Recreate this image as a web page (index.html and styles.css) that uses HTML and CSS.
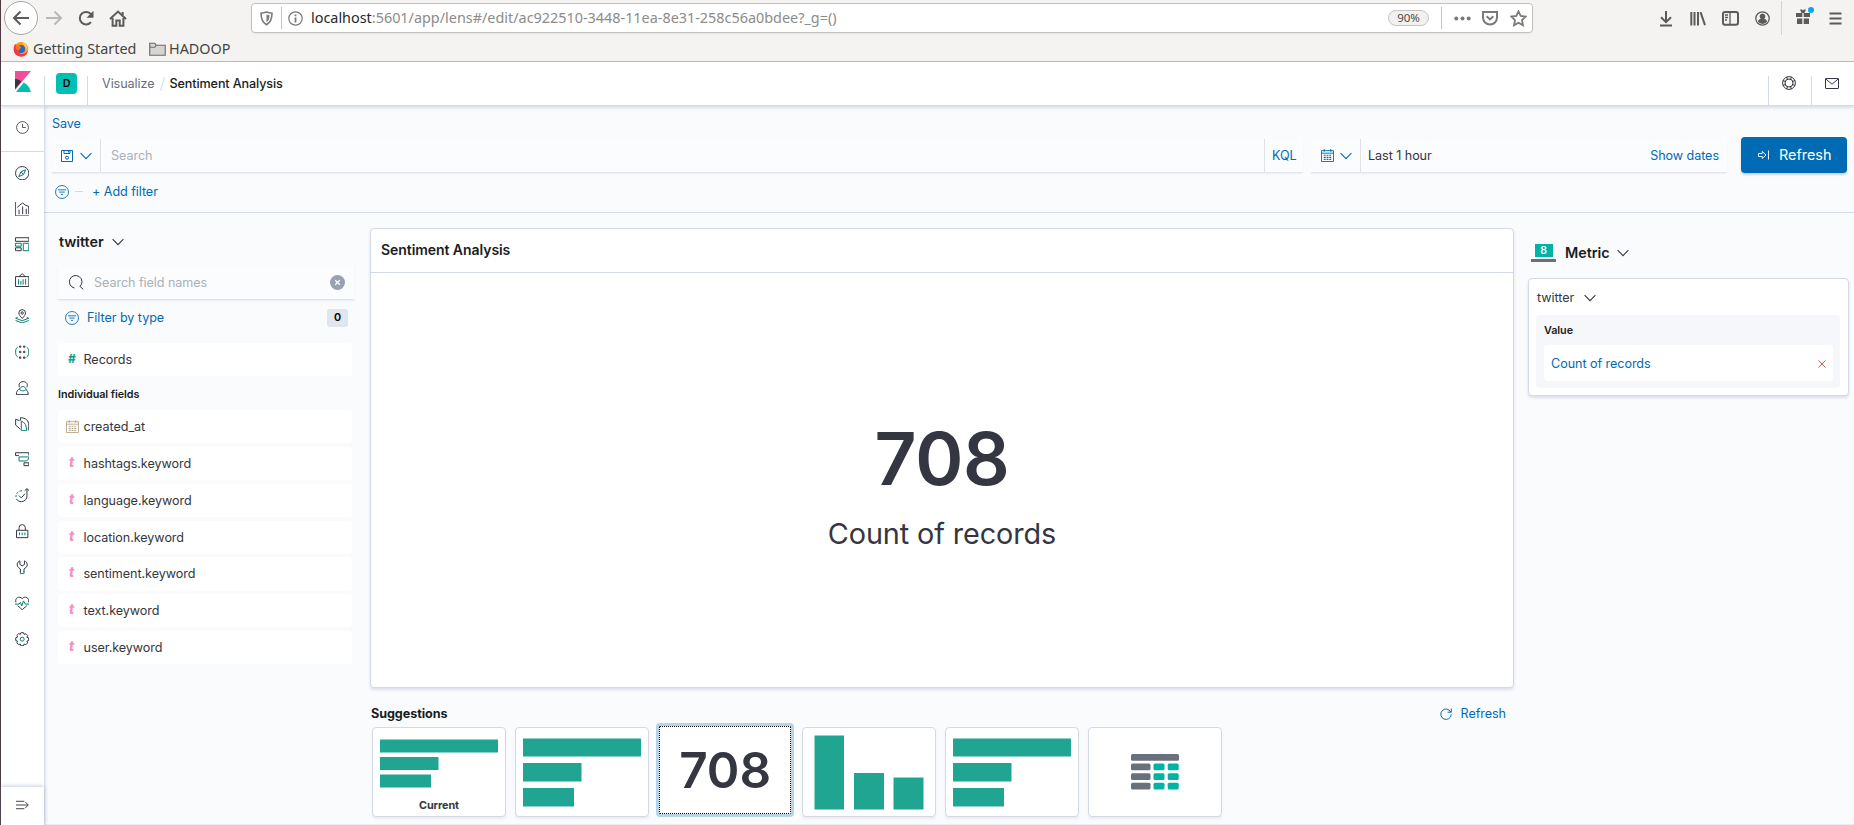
FILE: index.html
```html
<!DOCTYPE html>
<html lang="en">
<head>
<meta charset="utf-8">
<title>Sentiment Analysis - Kibana</title>
<link rel="stylesheet" href="styles.css">
</head>
<body>
<svg class="defs" aria-hidden="true">
  <symbol id="chevron" viewBox="0 0 12 12"><path d="M.6 3.200 6 8.600l5.400-5.400" stroke-width="1.100"/></symbol>
  <symbol id="filter" viewBox="0 0 16 16"><circle cx="8" cy="8" r="7.400"/><path d="M3.300 5.500h9.400M4.800 8.100h6.400M6.700 10.700h2.600"/></symbol>
  <symbol id="calendar" viewBox="0 0 14 14"><path d="M.5 1.800h13v11.700H.5zM.5 4.500h13M3.500 0v3M10.500 0v3"/><path d="M3 6.800h2M6 6.800h2M9 6.800h2M3 9h2M6 9h2M9 9h2M3 11.200h2M6 11.200h2M9 11.200h2" stroke-width="1.200"/></symbol>
</svg>
<div class="window">
  <header class="browser">
    <div class="toolbar">
      <span class="back"><svg width="18" height="16" viewBox="0 0 18 16"><path d="M17 8H2M8.500 1.500 2 8l6.500 6.500"/></svg></span>
      <svg class="forward" width="18" height="16" viewBox="0 0 18 16"><path d="M1 8h15M9.500 1.500 16 8l-6.500 6.500"/></svg>
      <svg class="reload" width="17" height="16" viewBox="0 0 17 16"><path d="M13 12.200A6.300 6.300 0 1 1 13 4.200"/><path class="solid" d="M15.500.8v7H8.500z"/></svg>
      <svg class="home" width="18" height="17" viewBox="0 0 18 17"><path d="M1 9 9 1.500 17 9M3.600 8v7.700h3.700V10.500h3.400v5.200h3.700V8"/><path d="M13.700 2v3"/></svg>
      <div class="urlbar">
        <svg class="shield" width="13" height="15" viewBox="0 0 13 15"><path d="M6.500 1C8.500 1.800 10 2.100 12 2.200c0 5.800-1 9-5.500 11.600C2 11.200 1 8 1 2.200c2-.1 3.500-.4 5.500-1.200z"/><path class="solid" d="M6.500 3.600c1.200.5 2.100.6 3 .7-.1 3.500-.8 5.400-3 7z"/></svg>
        <i class="bar-divider"></i>
        <svg class="info" width="15" height="15" viewBox="0 0 15 15"><circle cx="7.500" cy="7.500" r="6.700"/><path d="M7.500 6.500v5M7.500 3.500v1.700" stroke-width="1.800"/></svg>
        <span class="url"><b>localhost</b>:5601/app/lens#/edit/ac922510-3448-11ea-8e31-258c56a0bdee?_g=()</span>
        <span class="zoom">90%</span>
        <i class="bar-divider second"></i>
        <svg class="dots" width="17" height="5" viewBox="0 0 17 5"><circle cx="2.300" cy="2.500" r="2"/><circle cx="8.500" cy="2.500" r="2"/><circle cx="14.700" cy="2.500" r="2"/></svg>
        <svg class="pocket" width="16" height="15" viewBox="0 0 16 15"><path d="M1 1h14v5.500a7 7 0 0 1-14 0z"/><path d="M4.700 5.200 8 8.400l3.300-3.200"/></svg>
        <svg class="star" width="17" height="17" viewBox="0 0 17 17"><path d="m8.500 1.300 2.200 4.700 5 .6-3.700 3.500 1 5.200-4.500-2.600L4 15.300l1-5.200L1.300 6.600l5-.6z"/></svg>
      </div>
      <div class="tools">
        <svg width="14" height="17" viewBox="0 0 14 17"><path d="M7 1v11M2 7.200l5 5 5-5M1 15.500h12"/></svg>
        <svg width="16" height="15" viewBox="0 0 16 15"><path d="M1.300 1v13.500M4.500 1v13.500M8 1v13.500M10.500 1.200l4.500 13"/></svg>
        <svg width="17" height="15" viewBox="0 0 17 15"><rect x="1" y="1" width="15" height="12.700" rx="2"/><path d="M8 1v12.700M3 4h3M3 6.500h3M3 9h2" stroke-width="1.300"/></svg>
        <svg width="15" height="15" viewBox="0 0 15 15"><circle cx="7.500" cy="7.500" r="6.700" stroke-width="1.300"/><path class="solid" d="M7.500 2.500a2.900 2.900 0 0 1 1.700 5.200c1.700.4 2.700 1.500 2.900 3.100a6 6 0 0 1-9.200 0c.2-1.600 1.200-2.700 2.900-3.100a2.900 2.900 0 0 1 1.700-5.200z"/></svg>
        <i class="tool-divider"></i>
        <svg class="gift" width="19" height="18" viewBox="0 0 19 18"><path class="solid" d="M1 6h6.300v4H1zM8.700 6H15v4H8.700zM2 11.500h5.300V17H2zM8.700 11.500H14V17H8.700zM5 2.500h2l1 1 1-1h2L9.500 6h-3z"/><circle cx="16" cy="3" r="3"/></svg>
        <svg class="menu" width="13" height="13" viewBox="0 0 13 13"><path d="M.5 1.500h12M.5 6.500h12M.5 11.500h12"/></svg>
      </div>
    </div>
    <div class="bookmarks">
      <svg width="16" height="16" viewBox="0 0 16 16"><circle cx="8" cy="8.300" r="7.300" fill="#ff9a1f"/><path d="M2 3C0 7 0 12 4 14.500c5 2.700 10 .5 11-5C13 13 9 14 6 12 3 10 4 7 6 6z" fill="#f4364a"/><circle cx="8" cy="8" r="4" fill="#2467c9"/><path d="M3 4c2 1 5 0 5 3-1 1-2 1-2 3C3 9 2 6 3 4z" fill="#ff7424"/><path d="M9 1c4 1 6 5 5.500 9C13 7 11 4 9 1z" fill="#ffd633"/></svg>
      <span class="started">Getting Started</span>
      <svg width="17" height="14" viewBox="0 0 17 14"><path class="folder" d="M.7 1.200h5l1.500 2h9V13.300H.7zM.7 5.200h5l1.500-2"/></svg>
      <span class="hadoop">HADOOP</span>
    </div>
  </header>

  <div class="topbar">
    <div class="logo"><svg width="16" height="21" viewBox="0 0 16 21"><path d="M0 0h16L0 19z" fill="#f04e98"/><path d="M0 8c2.500.2 4.800 1 6.500 2.500L0 18z" fill="#343741"/><path d="M1 21 8.800 11.400C12.500 13.500 15 17 16 21z" fill="#00bfb3"/></svg></div>
    <div class="space"><span>D</span></div>
    <nav class="crumbs"><span>Visualize</span><i></i><strong>Sentiment Analysis</strong></nav>
    <div class="top-action"><svg width="14" height="14" viewBox="0 0 14 14"><circle cx="7" cy="7" r="6.400"/><circle cx="7" cy="7" r="4"/><path d="M4.500.9 5.500 3.300M9.500.9 8.500 3.300M4.500 13.100l1-2.400M9.500 13.100l-1-2.400M.9 4.500l2.400 1M.9 9.500l2.400-1M13.100 4.500l-2.400 1M13.100 9.500l-2.400-1"/></svg></div>
    <div class="top-action mail"><svg width="14" height="11" viewBox="0 0 14 11"><rect x=".5" y=".5" width="13" height="10" rx=".5"/><path d="m.8 1 6.200 5.200L13.200 1"/></svg></div>
  </div>

  <div class="app">
    <aside class="sidebar">
      <div class="recent"><svg viewBox="0 0 16 16" width="13" height="13"><circle cx="8" cy="8" r="7.300"/><path d="M8 3.500V8h4"/></svg></div>
      <nav class="nav">
        <span><svg viewBox="0 0 16 16"><circle cx="8" cy="8" r="7.400"/><path class="teal" d="M11.800 4.200 9.500 9.500l-5.300 2.300L6.500 6.500zM6.800 6.800l2.500 2.500"/></svg></span>
        <span><svg viewBox="0 0 16 16"><path class="teal" d="M.6 0v15.400H16"/><path d="m2.500 6 3-2.700L8.500 1l3 2.500L15.500 5M4.500 13.500V8.500M8.500 13.500V5M12.500 13.500v-6M15.300 5v8.500"/></svg></span>
        <span><svg viewBox="0 0 16 16"><path d="M.6.8h14.800v4H.6zM.6 12h6.300v3.200H.6z"/><path class="teal" d="M.6 7h6.300v3.200H.6zM9.200 7h6.200v8.200H9.200z"/></svg></span>
        <span><svg viewBox="0 0 16 16"><path d="M.6 4h14.800v11H.6zM4.500 4 8 .8 11.500 4"/><path class="teal" d="M4 7v6M6.500 9v4M9 7v6M11.800 6.500V13"/></svg></span>
        <span><svg viewBox="0 0 16 16"><path d="M8 10.500C5.500 7.800 4.300 6.300 4.300 4.400a3.700 3.700 0 0 1 7.400 0c0 1.900-1.200 3.400-3.700 6.100z"/><circle cx="8" cy="4.400" r="1.300"/><path class="teal" d="M3 9.200.7 10.300 8 13l7.300-2.700L13 9.200M.7 12.800 8 15.500l7.300-2.700"/></svg></span>
        <span><svg viewBox="0 0 16 16"><path d="M5 2.500V1.200h1.500v1.300zM9.500 2.500V1.200H11v1.300zM5 7h1.500v1.500H5zM9.500 7H11v1.500H9.500zM5 13.300h1.500v1.500H5zM9.500 13.300H11v1.500H9.500z"/><path class="teal" d="M3 2.500C.7 3.500.7 6.500.7 8s0 4 2.500 5.500M13 2.500c2.300 1 2.300 4 2.300 5.500s0 4-2.500 5.500"/></svg></span>
        <span><svg viewBox="0 0 16 16"><path d="M5 7C3.500 3.500 5.500.7 9 .7c4 0 5.700 3.300 4.200 6.300M5.500 8.500C3 9.500 1.500 11.500 1.500 15.200h13.200c0-3-1-4.700-2.500-5.700"/><path class="teal" d="M5 9.500C7 5 11 5 12.300 9.500 10 11.500 7.500 11.500 5 9.500z"/></svg></span>
        <span><svg viewBox="0 0 16 16"><path d="M5 4 .7 2.500V9L6 13.500M6 4V.8C12 .8 15.300 4 15.300 9v6"/><path class="teal" d="M7 4.500c4 1.500 6 5 6 10.700H7z"/></svg></span>
        <span><svg viewBox="0 0 16 16"><path d="M.6.8h14.800V4M.6.8V4h3.800M10 12h5.400v3.200H10z"/><path class="teal" d="M4.500 5.500h10.800v.5c0 2.500-1.800 4-4.300 4H4.500z"/></svg></span>
        <span><svg viewBox="0 0 16 16"><path d="M10.800 3 13.300.7 15.700 3M13.300 1v7.500a6.200 6.200 0 0 1-6 6.700c-2.500 0-4.500-1-5.800-3M4.500 8.500 7 11l4-4.500"/><path class="teal" d="M8 3C4 3 1 5.500 1 10" stroke-dasharray="3 1.500"/></svg></span>
        <span><svg viewBox="0 0 16 16"><path d="M1.700 7h12.600v8.200H1.700zM4.500 7V4.200a3.500 3.500 0 0 1 7 0V7"/><path class="teal" d="M5 9.500v3M8 9.500v3M11 9.500v3"/></svg></span>
        <span><svg viewBox="0 0 16 16"><path d="M5.500 1C2 2 1.500 6.500 4 8.500l2 1.500v3.500M10.500 1C14 2 14.500 6.500 12 8.500L10 10v3.500M5.500 1v4L8 6.500 10.500 5V1"/><path class="teal" d="M6 12.500v2.700h4v-2.700"/></svg></span>
        <span><svg viewBox="0 0 16 16"><path d="M1 7C-.5 2 5-.5 8 3c3-3.500 8.500-1 7 4M3 10.800l5 4.500 5-4.500"/><path class="teal" d="M0 9h4.500L6 7l1.500 4L9.500 5.500 11.500 9H16"/></svg></span>
        <span><svg viewBox="0 0 16 16"><path d="m6.500.8-.6 1.800-1.800-.8-2 2 .8 1.800L.8 6.500v3l2 .6-.8 2 2 2 1.900-.8.6 2h3l.6-2 2 .8 2-2-.9-2 2-.6v-3l-2-.6.9-2-2-2-2 .8-.6-1.900z"/><circle class="teal" cx="8" cy="8" r="2.200"/></svg></span>
      </nav>
      <div class="expand"><svg viewBox="0 0 14 10" width="13" height="10"><path d="M0 1h9M0 5h13M0 9h9M10 1.800 13.200 5 10 8.200"/></svg></div>
    </aside>

    <main class="content">
      <section class="query">
        <a class="save">Save</a>
        <div class="query-row">
          <div class="searchbar">
            <div class="saved"><svg class="disk" width="12" height="12" viewBox="0 0 12 12"><path d="M.5.5h11v11H.5zM3 .5v3h6v-3M7.500 1v1.500"/><circle cx="6" cy="7.700" r="1.500"/></svg><svg class="chev"><use href="#chevron"/></svg></div>
            <div class="query-input">Search</div>
            <div class="kql">KQL</div>
          </div>
          <div class="datebar">
            <div class="saved quick"><svg class="cal"><use href="#calendar"/></svg><svg class="chev"><use href="#chevron"/></svg></div>
            <span class="range">Last 1 hour</span>
            <a>Show dates</a>
          </div>
          <button class="refresh"><svg width="12" height="10" viewBox="0 0 12 10"><path d="M.5 3.500h3.800v-2L8 5 4.300 8.500v-2H.5zM10.500.5v9"/></svg>Refresh</button>
        </div>
        <div class="filters"><svg class="filter-icon"><use href="#filter"/></svg><i></i><a>+ Add filter</a></div>
      </section>

      <div class="lens">
        <section class="fields">
          <h2>twitter <svg class="chev"><use href="#chevron"/></svg></h2>
          <div class="field-search">
            <svg width="15" height="15" viewBox="0 0 15 15"><path d="M5.500 13A6.300 6.300 0 1 1 11 11.400M10.800 11.200l3.500 3.200"/></svg>
            <span>Search field names</span>
            <svg class="clear" width="15" height="15" viewBox="0 0 15 15"><circle cx="7.500" cy="7.500" r="7.500"/><path d="m5.200 5.200 4.600 4.600M9.800 5.200 5.200 9.800"/></svg>
          </div>
          <div class="field-type"><svg class="filter-icon"><use href="#filter"/></svg><a>Filter by type</a><span class="badge">0</span></div>
          <div class="field records"><b class="hash">#</b>Records</div>
          <h3>Individual fields</h3>
          <div class="field-list">
            <div class="field"><svg class="cal"><use href="#calendar"/></svg>created_at</div>
            <div class="field"><b>t</b>hashtags.keyword</div>
            <div class="field"><b>t</b>language.keyword</div>
            <div class="field"><b>t</b>location.keyword</div>
            <div class="field"><b>t</b>sentiment.keyword</div>
            <div class="field"><b>t</b>text.keyword</div>
            <div class="field"><b>t</b>user.keyword</div>
          </div>
        </section>

        <section class="workspace">
          <div class="panel">
            <h1>Sentiment Analysis</h1>
            <div class="metric"><div class="value">708</div><div class="label">Count of records</div></div>
          </div>
          <div class="suggest-head"><h2>Suggestions</h2><a><svg width="12" height="12" viewBox="0 0 12 12"><path d="M10.700 4A5.200 5.200 0 1 0 11.200 6.500M11.300.5v3.700H7.500"/></svg>Refresh</a></div>
          <div class="cards">
            <div class="card current"><svg width="118" height="49" viewBox="0 0 118 49"><path d="M0 .5h118v13H0zM0 18h58.500v13H0zM0 35.500h51v13H0z"/></svg><span>Current</span></div>
            <div class="card"><svg width="118" height="69" viewBox="0 0 118 69"><path d="M0 .5h118v18H0zM0 25h58.500v18.500H0zM0 50h51v18.500H0z"/></svg></div>
            <div class="card selected"><strong>708</strong></div>
            <div class="card"><svg width="110" height="75" viewBox="0 0 110 75"><path d="M.5.500h29.500V74.500H.5zM40 38h30v36.500H40zM79.500 42.500h30v32h-30z"/></svg></div>
            <div class="card"><svg width="118" height="69" viewBox="0 0 118 69"><path d="M0 .5h118v18H0zM0 25h58.500v18.500H0zM0 50h51v18.500H0z"/></svg></div>
            <div class="card"><svg width="48" height="36" viewBox="0 0 48 36"><g fill="#69707d"><rect width="48" height="6.700" rx="1.500"/><rect y="9.600" width="19.500" height="6.700" rx="1.500"/><rect y="19.200" width="19.500" height="6.700" rx="1.500"/><rect y="28.700" width="19.500" height="6.700" rx="1.500"/></g><g fill="#00b3a4"><rect x="22.500" y="9.600" width="11" height="6.700" rx="1.500"/><rect x="36.700" y="9.600" width="11" height="6.700" rx="1.500"/><rect x="22.500" y="19.200" width="11" height="6.700" rx="1.500"/><rect x="36.700" y="19.200" width="11" height="6.700" rx="1.500"/><rect x="22.500" y="28.700" width="11" height="6.700" rx="1.500"/><rect x="36.700" y="28.700" width="11" height="6.700" rx="1.500"/></g></svg></div>
          </div>
        </section>

        <section class="config">
          <h2><span class="metric-icon"><b>8</b></span>Metric <svg class="chev"><use href="#chevron"/></svg></h2>
          <div class="config-panel">
            <div class="source">twitter <svg class="chev"><use href="#chevron"/></svg></div>
            <div class="dimension">
              <h3>Value</h3>
              <div class="dimension-item"><a>Count of records</a><svg width="8" height="8" viewBox="0 0 8 8"><path d="m.5.5 7 7M7.500.5l-7 7"/></svg></div>
            </div>
          </div>
        </section>
      </div>
    </main>
  </div>
</div>
</body>
</html>
```
FILE: styles.css
```css
* { box-sizing: border-box; }
body { margin: 0; font: 400 12.6px/18px Inter, "Liberation Sans", sans-serif; letter-spacing: -0.06px; color: #343741; background: #fafbfd; overflow: hidden; }
h1, h2, h3 { margin: 0; color: #1a1c21; font-weight: 600; }
svg { display: block; flex: none; fill: none; stroke: currentColor; }
.defs { position: absolute; width: 0; height: 0; }
i { display: block; flex: none; }
a { color: #006bb4; }
.window { width: 1854px; height: 825px; border-left: 1px solid #4a3a40; display: flex; flex-direction: column; }
.chev { width: 12px; height: 12px; }
.cal { width: 13px; height: 13px; }
.filter-icon { width: 14px; height: 14px; color: #006bb4; }

/* Browser chrome */
.browser { flex: none; height: 62px; background: #f4f3f1; border-bottom: 1px solid #bebbb8; font-family: "Noto Sans", sans-serif; letter-spacing: 0; }
.toolbar { height: 36px; display: flex; align-items: center; color: #5c5b59; stroke-width: 2; }
.toolbar .solid { fill: currentColor; stroke: none; }
.back { width: 34px; height: 34px; margin-left: 3px; border: 1px solid #a9a6a3; border-radius: 50%; background: #fdfdfd; display: grid; place-items: center; }
.forward { margin-left: 7px; color: #b9b8b6; }
.reload { margin-left: 15px; }
.home { margin-left: 14px; }
.urlbar { width: 1282px; height: 30px; margin-left: 124px; background: #fff; border: 1px solid #c4c1be; border-radius: 4px; box-shadow: 0 1px 2px rgba(0,0,0,.06); display: flex; align-items: center; color: #7b7a78; }
.shield { margin-left: 8px; stroke-width: 1.6; }
.bar-divider { width: 1px; height: 22px; margin-left: 8px; background: #c4c1be; }
.info { margin-left: 6px; stroke-width: 1.2; }
.url { width: 1077px; margin-left: 8px; font-size: 14.4px; color: #8c8b89; white-space: nowrap; }
.url b { font-weight: 400; color: #25272b; }
.zoom { width: 41px; height: 16px; border: 1px solid #c8c6c4; border-radius: 8px; background: #f2f1f0; color: #4b4a49; font-size: 11.5px; line-height: 14px; text-align: center; }
.second { margin-left: 12px; }
.dots { margin-left: 12px; fill: currentColor; stroke: none; }
.pocket { margin-left: 11px; }
.star { margin-left: 12px; stroke-width: 1.8; }
.tools { margin-left: 126px; display: flex; align-items: center; gap: 17px; }
.tools svg:nth-child(2) { margin: 0 -1px 0 0; }
.tools svg:nth-child(4) { margin: 0 0 0 -1px; }
.tool-divider { width: 1px; height: 34px; margin: 0 -4px 0 -6px; background: #d5d3d0; }
.gift { margin: -4px 0 0 0; }
.menu { margin-left: -2px; }
.gift circle { fill: #00a8f8; stroke: none; }
.bookmarks { height: 25px; padding: 1px 0 0 12px; display: flex; align-items: center; font-size: 14.4px; line-height: 20px; color: #454442; }
.bookmarks svg { stroke: none; }
.bookmarks .folder { fill: #d6d4d1; stroke: #6c6965; stroke-width: 1.1; }
.started { width: 104px; margin: 0 12px 0 4px; white-space: nowrap; }
.hadoop { margin-left: 3px; }

/* Kibana header */
.topbar { position: relative; z-index: 2; flex: none; height: 44px; background: #fff; border-bottom: 1px solid #d3dae6; box-shadow: 0 2px 3px rgba(100,120,160,.22); display: flex; align-items: flex-end; }
.logo { width: 43px; height: 34px; padding-left: 14px; }
.logo svg { stroke: none; }
.space { width: 44px; height: 29px; border: solid #d3dae6; border-width: 0 1px; padding-left: 11px; }
.space span { display: block; width: 21px; height: 21px; margin-top: -3px; border-radius: 4px; background: #00bfb3; color: #000; font-size: 10.8px; font-weight: 600; line-height: 21px; text-align: center; }
.crumbs { flex: 1; height: 30px; padding-left: 14px; display: flex; color: #69707d; }
.crumbs i { width: 1px; height: 14px; margin: 2px 7px 0 7px; background: #d3dae6; transform: rotate(15deg); }
.crumbs strong { color: #1a1c21; font-weight: 500; letter-spacing: -.12px; }
.top-action { width: 43px; height: 29px; padding-left: 13px; border-left: 1px solid #d3dae6; }
.mail svg { margin-top: 2px; }

/* Application navigation */
.app { flex: 1; display: flex; min-height: 0; }
.sidebar { z-index: 1; width: 43px; flex: none; background: #fff; box-shadow: 1px 0 3px rgba(100,120,160,.3); display: flex; flex-direction: column; }
.sidebar svg { margin-left: 14px; }
.recent { height: 46px; padding-bottom: 3px; border-bottom: 1px solid #d3dae6; display: flex; align-items: center; }
.recent svg { margin-left: 15px; }
.nav { flex: 1; padding-top: 3px; }
.nav span { height: 35.85px; display: flex; align-items: center; }
.nav svg { width: 14.4px; height: 14.4px; stroke-width: 1.1; }
.teal { stroke: #017d73; }
.expand { height: 38px; padding-bottom: 2px; display: flex; align-items: center; box-shadow: 0 -1px 4px rgba(100,120,160,.35); }
.expand svg { margin-left: 15px; }

/* Query bar */
.content { flex: 1; display: flex; flex-direction: column; border-bottom: 1px solid #ececee; }
.query { height: 107px; flex: none; padding: 9px 7px 0 8px; border-bottom: 1px solid #d3dae6; }
.save { display: block; height: 22px; }
.query-row { display: flex; height: 36px; }
.searchbar, .datebar { display: flex; align-items: center; height: 34px; margin-top: 2px; background: #fbfcfd; border-bottom: 1px solid #e3e6eb; box-shadow: 0 1px 1px rgba(100,120,160,.08); }
.searchbar { width: 1251px; }
.saved { width: 49px; height: 33px; padding-left: 9px; border-right: 1px solid #dfe2e8; display: flex; align-items: center; gap: 7px; color: #006bb4; }
.query-input { flex: 1; padding-left: 10px; color: #abb0ba; }
.kql { width: 39px; height: 33px; line-height: 33px; padding-left: 7px; border-left: 1px solid #dfe2e8; color: #006bb4; }
.datebar { width: 416px; margin-left: 8px; padding-right: 8px; }
.quick { width: 50px; padding-left: 10px; gap: 6px; }
.range { flex: 1; padding-left: 7px; }
.refresh { width: 106px; height: 36px; margin-left: 14px; padding: 0 0 0 17px; border: 0; border-radius: 4px; background: #006bb4; box-shadow: 0 2px 2px rgba(54,97,126,.25); color: #fff; font: inherit; font-size: 14.4px; display: flex; align-items: center; gap: 9px; }
.refresh svg { stroke-width: .9; }
.filters { height: 37px; padding-left: 3px; display: flex; align-items: center; }
.filters a { padding-top: 1px; }
.filters i { width: 8px; height: 1px; margin: 0 9px 0 6px; background: #d3dae6; }

/* Lens layout */
.lens { flex: 1; display: flex; }
h2 { font-size: 14.4px; line-height: 20px; display: flex; align-items: center; }
h2 .chev { color: #343741; margin-left: 8px; }
h3 { font-size: 10.8px; line-height: 16px; }
.fields { width: 326px; padding: 19px 0 0 14px; }
.fields h2 { padding-left: 1px; }
.field-search { width: 296px; height: 34px; margin-top: 14px; padding: 0 9px 0 11px; background: #fbfcfd; border-bottom: 1px solid #dfe3ea; box-shadow: 0 1px 2px rgba(100,120,160,.1); display: flex; align-items: center; color: #abb0ba; }
.field-search svg { color: #343741; }
.field-search span { flex: 1; padding-left: 10px; }
.field-search .clear circle { fill: #98a2b3; stroke: none; }
.clear path { stroke: #fff; stroke-width: 1.3; }
.field-type { width: 290px; height: 20px; margin: 8px 0 15px; padding-left: 7px; display: flex; align-items: center; }
.field-type a { flex: 1; padding-left: 8px; }
.badge { width: 21px; height: 18px; border-radius: 3px; background: #e0e5ee; color: #000; font-size: 10.8px; font-weight: 600; line-height: 18px; text-align: center; }
.field { width: 294px; height: 33.2px; padding: 1px 0 0 8px; border-radius: 4px; background: #fff; display: flex; align-items: center; }
.field .cal { color: #b9a888; margin: -1px 4.5px 0 0; }
.field b { width: 17.5px; padding-left: 3px; font-size: 13.5px; font-style: italic; font-weight: 800; line-height: 14px; margin-top: -4px; color: #f990c0; }
.field .hash { padding-left: 2px; color: #16a18f; font-size: 11.5px; margin-top: -2px; }
.field-list { display: flex; flex-direction: column; gap: 3.6px; }
.fields h3 { margin: 11px 0 7px; }

/* Workspace */
.workspace { width: 1144px; padding-top: 15px; }
.panel { height: 460px; background: #fff; border: 1px solid #d3dae6; border-radius: 4px; box-shadow: 0 2px 3px rgba(100,120,160,.2); display: flex; flex-direction: column; }
.panel h1 { height: 44px; padding: 12px 10px; border-bottom: 1px solid #d3dae6; font-size: 14px; line-height: 18px; }
.metric { flex: 1; padding-top: 8px; display: flex; flex-direction: column; align-items: center; justify-content: center; }
.value { font-size: 73px; font-weight: 600; line-height: 90px; letter-spacing: -.3px; }
.label { margin-top: 10px; font-size: 28.8px; line-height: 40px; letter-spacing: -.1px; }
.suggest-head { height: 39px; padding: 17px 8px 0 1px; display: flex; align-items: flex-start; justify-content: space-between; }
.suggest-head h2 { font-size: 12.6px; line-height: 18px; font-weight: 700; }
.suggest-head a { display: flex; align-items: center; gap: 9px; }
.cards { padding-left: 2px; display: flex; gap: 9.3px; }
.card { width: 134px; height: 90px; background: #fff; border: 1px solid #d3dae6; border-radius: 4px; box-shadow: 0 2px 2px rgba(100,120,160,.1); display: flex; flex-direction: column; align-items: center; justify-content: center; }
.card svg { stroke: none; fill: #20a593; }
.current { justify-content: flex-start; padding-top: 11px; }
.current span { margin-top: 9px; font-size: 10.8px; font-weight: 700; }
.selected { width: 132px; height: 88px; margin: -1px 1.5px 0 .5px; outline: 3px solid #b5d4e9; border: 1px dotted #000; border-radius: 1px; }
.selected strong { font-size: 49.5px; line-height: 60px; font-weight: 600; }

/* Configuration */
.config { padding: 30px 0 0 14px; }
.config h2 { padding-left: 3px; }
.config h2 .chev { margin-left: 7px; }
.metric-icon { width: 25px; height: 18px; margin-right: 9px; border-bottom: 3px solid #69707d; display: flex; justify-content: center; }
.metric-icon b { width: 18px; height: 13px; background: #00b3a4; color: #fff; font-size: 10.5px; line-height: 13px; font-weight: 600; text-align: center; }
.config-panel { width: 321px; height: 118px; margin-top: 15px; padding: 10px 7px; background: #fff; border: 1px solid #d3dae6; border-radius: 4px; box-shadow: 0 2px 3px rgba(100,120,160,.2); }
.source { display: flex; align-items: center; padding-left: 1px; }
.source .chev { margin-left: 10px; }
.dimension { width: 304px; height: 73px; margin-top: 8px; padding: 8px 8px; background: #f5f7fa; border-radius: 4px; }
.dimension-item { width: 289px; height: 36px; margin-top: 6px; padding: 1px 7px 0; background: #fff; border-radius: 4px; display: flex; align-items: center; justify-content: space-between; }
.dimension-item svg { color: #cc4b42; stroke-width: .9; }
```
